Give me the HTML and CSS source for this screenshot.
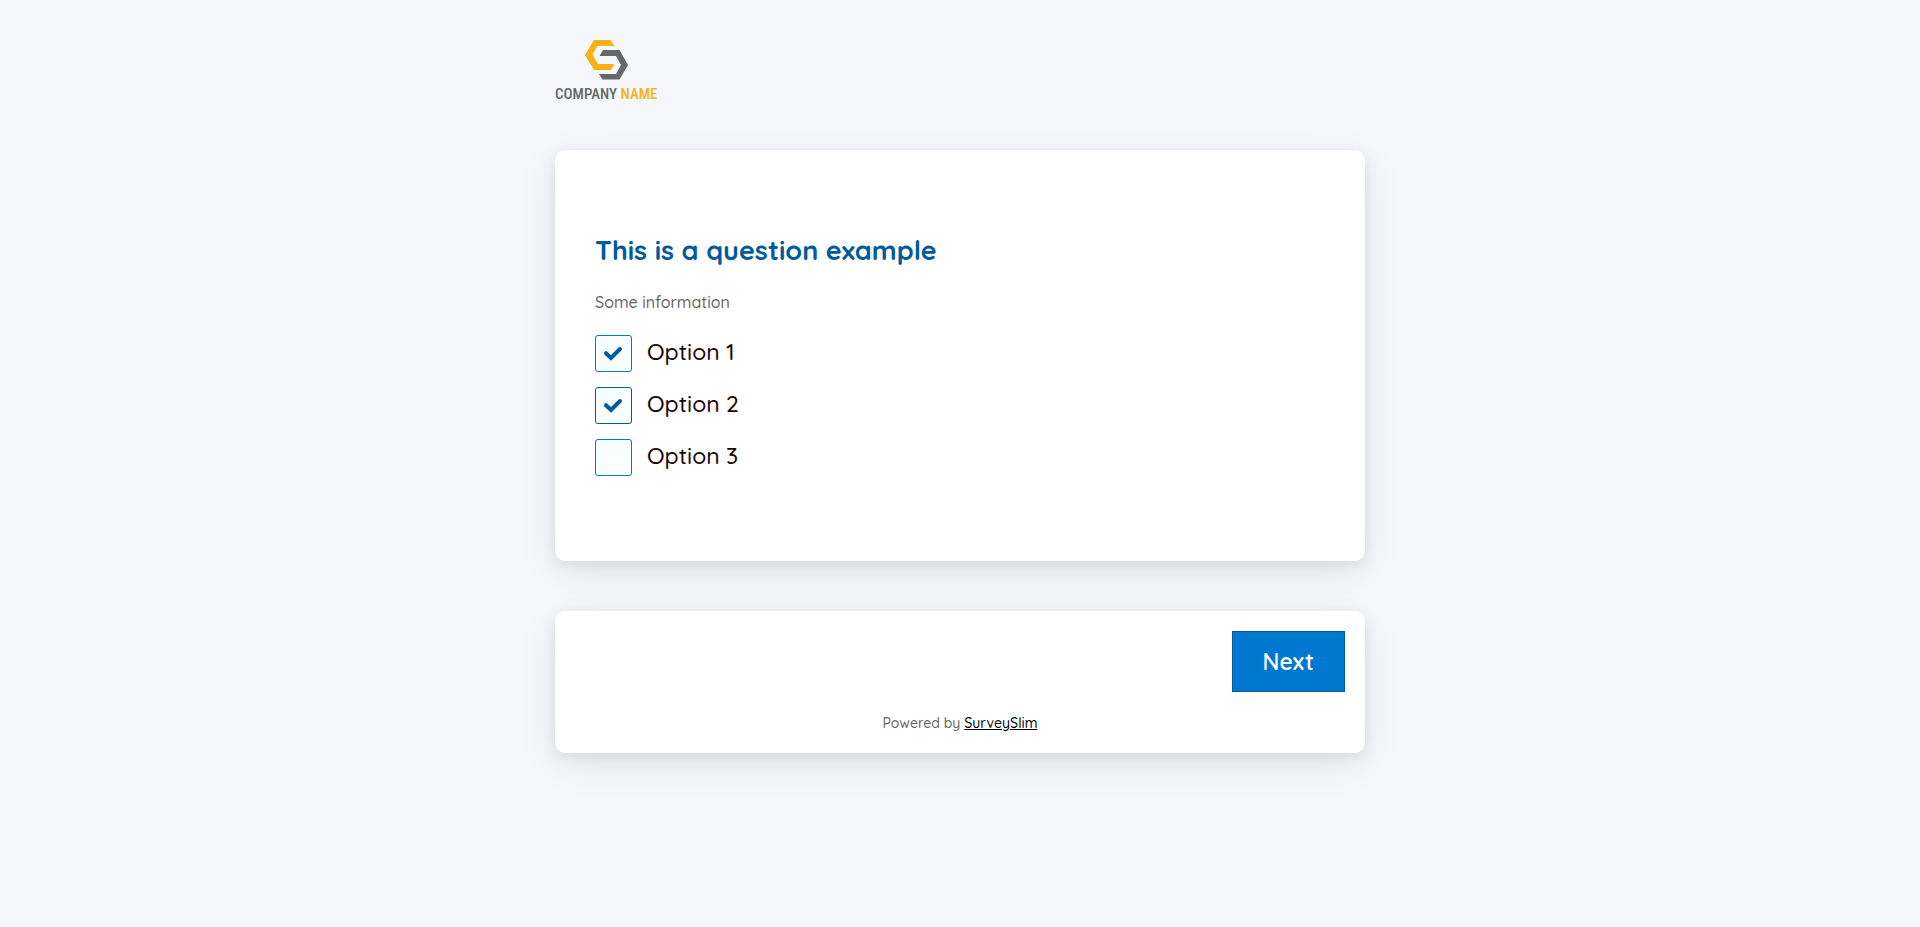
FILE: index.html
```html
<!DOCTYPE html>
<html lang="en">
<head>
<meta charset="utf-8">
<meta name="viewport" content="width=device-width, initial-scale=1">
<title>Survey</title>
<link rel="stylesheet" href="styles.css">
</head>
<body>
<form class="survey">
  <header class="logo">
    <svg class="logo-mark" viewBox="0 0 43 40" aria-hidden="true">
      <path fill="#f7b015" d="M9 0H25.500L29.500 6H12.500L7.500 14.500L13 24H29.500L26 30H9L0 15Z"/>
      <path fill="#666868" d="M18 10H34.500L43 25L34.500 39.500H17.500L14 34H31L36 25L31 16H14.500Z"/>
    </svg>
    <span class="logo-text">COMPANY <span class="logo-accent">NAME</span></span>
  </header>
  <main class="card question">
    <h1 class="title">This is a question example</h1>
    <p class="info">Some information</p>
    <div class="options">
      <label class="option"><input class="box" type="checkbox" checked><svg class="tick" viewBox="0 0 18 14" aria-hidden="true"><path d="M2 7.200L7 12L16 3"/></svg><span class="option-text">Option 1</span></label>
      <label class="option"><input class="box box-active" type="checkbox" checked><svg class="tick" viewBox="0 0 18 14" aria-hidden="true"><path d="M2 7.200L7 12L16 3"/></svg><span class="option-text">Option 2</span></label>
      <label class="option"><input class="box" type="checkbox"><svg class="tick" viewBox="0 0 18 14" aria-hidden="true"><path d="M2 7.200L7 12L16 3"/></svg><span class="option-text">Option 3</span></label>
    </div>
  </main>
  <footer class="card footer">
    <button class="next" type="button">Next</button>
    <p class="powered">Powered by <a class="brand" href="#">SurveySlim</a></p>
  </footer>
</form>
</body>
</html>
```
FILE: styles.css
```css
* { box-sizing: border-box; }

body {
  margin: 0;
  min-height: 100vh;
  background: #f5f7fb;
  color: #1a0509;
  font-family: Quicksand, Lato, sans-serif;
  font-weight: 500;
}

.survey {
  display: flex;
  flex-direction: column;
  gap: 50px;
  max-width: 810px;
  margin: 0 auto;
  padding: 40px 0;
}

.logo {
  display: flex;
  flex-direction: column;
  align-items: center;
  align-self: flex-start;
  gap: 8px;
}

.logo-mark { width: 43px; height: 40px; }

.logo-text {
  color: #666868;
  font: 500 15px/12px "Roboto Condensed", "Liberation Sans Narrow", "Arial Narrow", sans-serif;
  white-space: nowrap;
}

.logo-accent { color: #f7b015; }

.card {
  background: #fff;
  border-radius: 10px;
  box-shadow: 0 10px 40px rgba(0, 0, 0, 0.08), 0 4px 14px rgba(0, 0, 0, 0.08);
}

.question { padding: 80px 40px 85px; }

.title {
  margin: 0;
  color: #005a9e;
  font-size: 27px;
  font-weight: 700;
  line-height: 40px;
}

.info {
  margin: 20px 0;
  color: #666;
  font-size: 16px;
  line-height: 24px;
}

.options {
  display: flex;
  flex-direction: column;
  gap: 15px;
  padding-top: 1px;
}

.option {
  position: relative;
  display: flex;
  align-items: center;
  gap: 15px;
  align-self: flex-start;
  cursor: pointer;
}

.box {
  appearance: none;
  width: 37px;
  height: 37px;
  margin: 0;
  border: 1px solid #0078d0;
  border-radius: 3px;
  background: #f8fdff;
}

.box-active { border-color: #005a9e; }

.tick {
  position: absolute;
  left: 9px;
  top: 11px;
  width: 18px;
  height: 14px;
  overflow: visible;
  fill: none;
  stroke: #005a9e;
  stroke-width: 4;
  stroke-linecap: round;
  visibility: hidden;
}

.box:checked + .tick { visibility: visible; }

.option-text {
  font-size: 23px;
  line-height: 34px;
  padding-bottom: 3px;
}

.footer {
  display: flex;
  flex-direction: column;
  padding: 20px 20px 19px;
  gap: 21px;
}

.next {
  align-self: flex-end;
  padding: 12px 30px;
  border: 1px solid #005a9e;
  background: #0078d0;
  color: #fff;
  font-family: inherit;
  font-size: 23px;
  font-weight: 600;
  line-height: 35px;
}

.powered {
  margin: 0;
  color: #666;
  font-size: 14px;
  line-height: 21px;
  text-align: center;
}

.brand { color: #000; }
```
